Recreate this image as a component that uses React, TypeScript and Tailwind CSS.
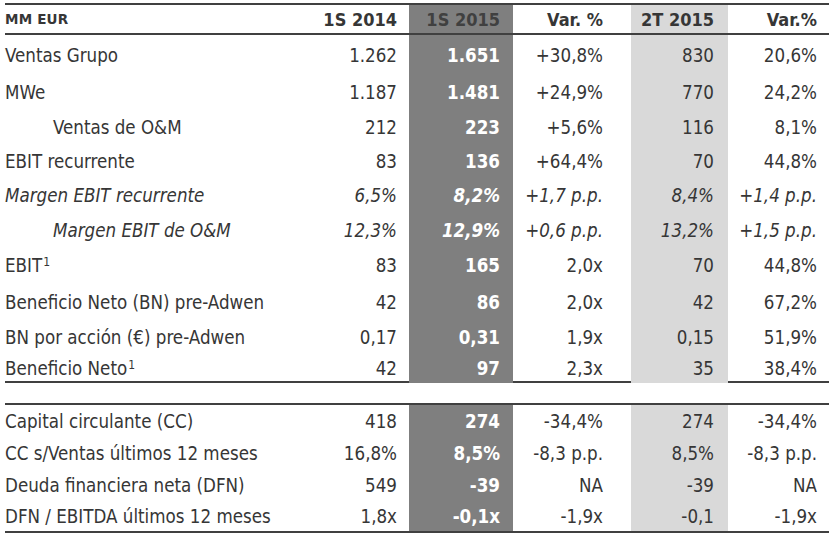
import React from "react";

type Row = {
  label: React.ReactNode;
  v: [string, string, string, string, string];
  h: string;
  italic?: boolean;
  indent?: boolean;
};

const sup = (t: string) => (
  <span>
    {t}
    <span className="text-[12px] relative -top-[6px] ml-[1px]">1</span>
  </span>
);

const rowsA: Row[] = [
  { label: "Ventas Grupo", v: ["1.262", "1.651", "+30,8%", "830", "20,6%"], h: "h-[39px]" },
  { label: "MWe", v: ["1.187", "1.481", "+24,9%", "770", "24,2%"], h: "h-[36px]" },
  { label: "Ventas de O&M", v: ["212", "223", "+5,6%", "116", "8,1%"], h: "h-[34px]", indent: true },
  { label: "EBIT recurrente", v: ["83", "136", "+64,4%", "70", "44,8%"], h: "h-[34px]" },
  { label: "Margen EBIT recurrente", v: ["6,5%", "8,2%", "+1,7 p.p.", "8,4%", "+1,4 p.p."], h: "h-[34px]", italic: true },
  { label: "Margen EBIT de O&M", v: ["12,3%", "12,9%", "+0,6 p.p.", "13,2%", "+1,5 p.p."], h: "h-[35px]", italic: true, indent: true },
  { label: sup("EBIT"), v: ["83", "165", "2,0x", "70", "44,8%"], h: "h-[36px]" },
  { label: "Beneficio Neto (BN) pre-Adwen", v: ["42", "86", "2,0x", "42", "67,2%"], h: "h-[37px]" },
  { label: "BN por acción (€) pre-Adwen", v: ["0,17", "0,31", "1,9x", "0,15", "51,9%"], h: "h-[33px]" },
  { label: sup("Beneficio Neto"), v: ["42", "97", "2,3x", "35", "38,4%"], h: "h-[28px]" },
];

const rowsB: Row[] = [
  { label: "Capital circulante (CC)", v: ["418", "274", "-34,4%", "274", "-34,4%"], h: "h-[31px]" },
  { label: "CC s/Ventas últimos 12 meses", v: ["16,8%", "8,5%", "-8,3 p.p.", "8,5%", "-8,3 p.p."], h: "h-[33px]" },
  { label: "Deuda financiera neta (DFN)", v: ["549", "-39", "NA", "-39", "NA"], h: "h-[32px]" },
  { label: "DFN / EBITDA últimos 12 meses", v: ["1,8x", "-0,1x", "-1,9x", "-0,1", "-1,9x"], h: "h-[30px]" },
];

const grid = "grid grid-cols-[292px_112px_104px_118px_97px_101px]";

function TableRow({ r }: { r: Row }) {
  const it = r.italic ? "italic" : "";
  return (
    <div className={`${grid} ${r.h} ${it} text-[18.6px]`}>
      <div className={`flex items-center pt-[2px] ${r.indent ? "pl-[48px]" : ""}`}>{r.label}</div>
      <div className="flex items-center justify-end pt-[2px] pr-[12px]">{r.v[0]}</div>
      <div className="flex items-center justify-end pt-[2px] pr-[13px] bg-[#7f7f7f] text-white font-bold">{r.v[1]}</div>
      <div className="flex items-center justify-end pt-[2px] pr-[28px]">{r.v[2]}</div>
      <div className="flex items-center justify-end pt-[2px] pr-[14px] bg-[#d9d9d9]">{r.v[3]}</div>
      <div className="flex items-center justify-end pt-[2px] pr-[12px]">{r.v[4]}</div>
    </div>
  );
}

export default function App() {
  return (
    <div
      className="w-[837px] h-[534px] bg-white text-[#363636] text-[18px] pl-[5px] pt-[3px]"
      style={{ fontFamily: '"DejaVu Sans Condensed", "DejaVu Sans", sans-serif' }}
    >
      <div className="w-[824px]">
        <div className="border-t-2 border-b-2 border-[#404040]">
          <div className={`${grid} h-[28px] font-bold`}>
            <div className="flex items-center pt-[1px] text-[13.5px] tracking-[0.2px] font-['DejaVu_Sans',sans-serif]">MM EUR</div>
            <div className="flex items-center justify-end pr-[12px]">1S 2014</div>
            <div className="flex items-center justify-end pr-[13px] bg-[#7f7f7f] text-[#404040]">1S 2015</div>
            <div className="flex items-center justify-end pr-[28px]">Var. %</div>
            <div className="flex items-center justify-end pr-[14px] bg-[#d9d9d9]">2T 2015</div>
            <div className="flex items-center justify-end pr-[12px]">Var.%</div>
          </div>
        </div>
        <div className="border-b-2 border-[#404040]">
          {rowsA.map((r, i) => (
            <TableRow key={i} r={r} />
          ))}
        </div>
        <div className="h-[20px]" />
        <div className="border-t-2 border-b-2 border-[#404040]">
          {rowsB.map((r, i) => (
            <TableRow key={i} r={r} />
          ))}
        </div>
      </div>
    </div>
  );
}
